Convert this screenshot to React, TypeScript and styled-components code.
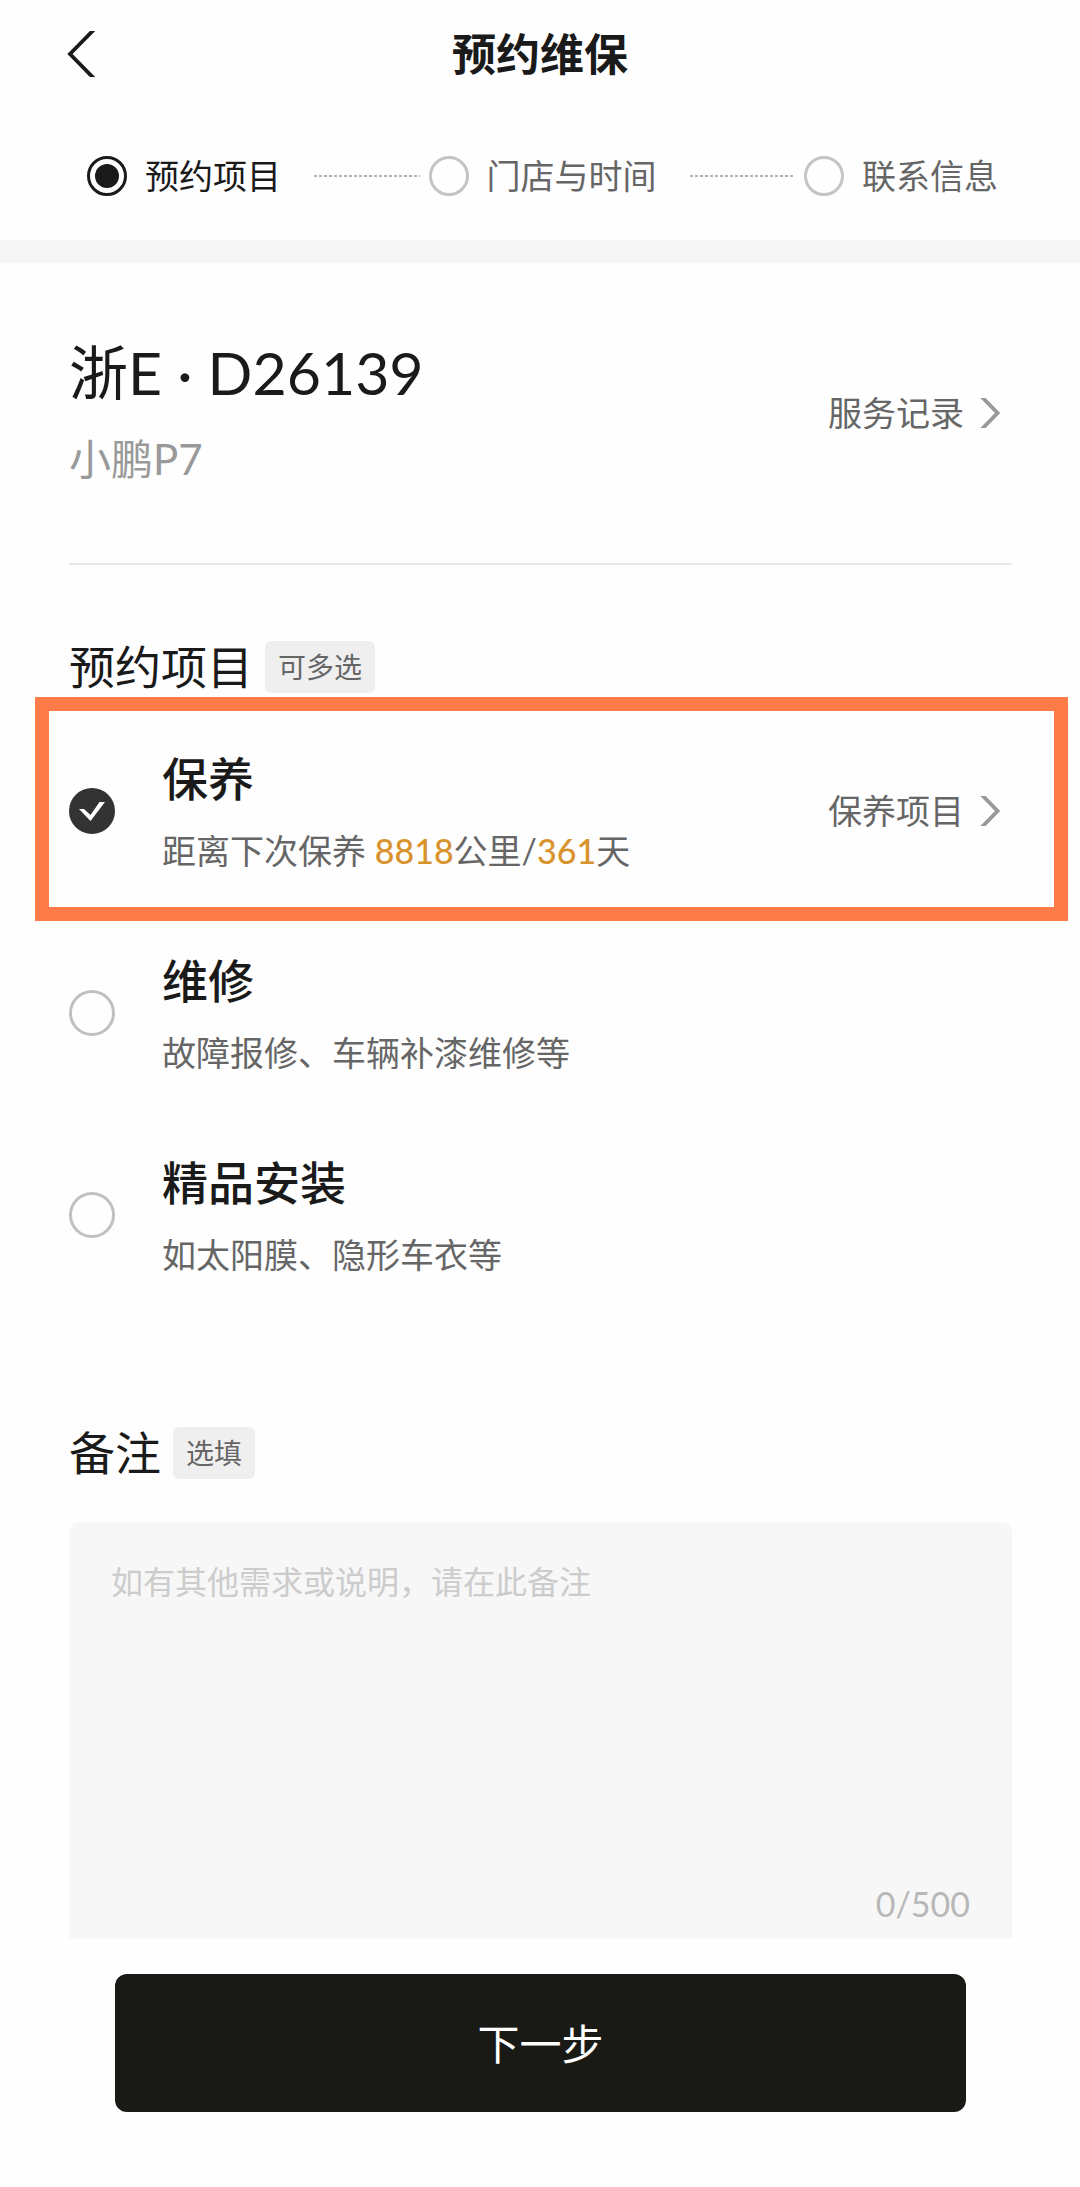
import React, { useState } from "react";
import styled, { createGlobalStyle } from "styled-components";

const ink = "#1a1a1a";
const muted = "#666666";

const GlobalStyle = createGlobalStyle`
  * { box-sizing: border-box; }
  body {
    margin: 0;
    background: #fefefe;
    color: ${ink};
    font-family: Lato, "Noto Sans CJK SC", "Noto Sans", sans-serif;
  }
  h1, h2, h3, p, ol, ul { margin: 0; padding: 0; font-weight: 400; }
  ol, ul { list-style: none; }
  button, textarea { font-family: inherit; }
`;

const Page = styled.div`
  display: flex;
  flex-direction: column;
`;

const Header = styled.header`
  display: grid;
  grid-template-columns: 1fr auto 1fr;
  align-items: center;
  height: 108px;
  padding: 0 66px;
`;

const BackButton = styled.button`
  display: flex;
  justify-self: start;
  padding: 0;
  border: 0;
  background: none;
  color: ${ink};
  cursor: pointer;
`;

const PageTitle = styled.h1`
  font-size: 44px;
  line-height: 64px;
  font-weight: 700;
`;

const Steps = styled.ol`
  display: flex;
  align-items: center;
  height: 132px;
  padding: 3px 82px 0 87px;
`;

const Step = styled.li<{ $active?: boolean }>`
  display: flex;
  align-items: center;
  gap: 18px;
  font-size: 34px;
  line-height: 48px;
  white-space: nowrap;
  color: ${(p) => (p.$active ? ink : muted)};
`;

const StepDot = styled.span<{ $active?: boolean }>`
  display: grid;
  place-items: center;
  width: 40px;
  height: 40px;
  border: 3px solid ${(p) => (p.$active ? ink : "#c4c4c4")};
  border-radius: 50%;

  &::after {
    content: "";
    width: 24px;
    height: 24px;
    border-radius: 50%;
    background: ${(p) => (p.$active ? ink : "transparent")};
  }
`;

const StepLine = styled.li`
  flex: 1;
  height: 2px;
  margin: 0 9px 0 33px;
  background: repeating-linear-gradient(90deg, #b4b4b4 0 3px, transparent 3px 5px);
`;

const Band = styled.div`
  height: 23px;
  background: #f6f6f6;
`;

const Main = styled.main`
  padding: 0 68px 0 69px;
`;

const Vehicle = styled.section`
  display: flex;
  align-items: center;
  justify-content: space-between;
  height: 302px;
  border-bottom: 2px solid #e8e8e8;
`;

const Plate = styled.h2`
  font-size: 59px;
  line-height: 76px;
`;

const Model = styled.p`
  font-size: 42px;
  line-height: 64px;
  margin-top: 16px;
  color: #999999;
`;

const MoreLink = styled.a`
  display: flex;
  align-items: center;
  gap: 16px;
  padding-right: 12px;
  font-size: 34px;
  line-height: 48px;
  color: ${muted};
  text-decoration: none;
  white-space: nowrap;

  svg { color: #999999; }
`;

const SectionHead = styled.div`
  display: flex;
  align-items: center;
  gap: 12px;
  height: 52px;
`;

const SectionTitle = styled.h2`
  font-size: 46px;
  line-height: 52px;
`;

const Badge = styled.span`
  padding: 0 13px;
  border-radius: 6px;
  background: #efefef;
  font-size: 28px;
  line-height: 52px;
  color: ${muted};
`;

const Items = styled.section`
  padding-top: 76px;
`;

const OptionList = styled.ul`
  display: flex;
  flex-direction: column;
  padding-top: 4px;
`;

const Option = styled.li<{ $marked?: boolean }>`
  display: flex;
  align-items: center;
  justify-content: space-between;
  ${(p) =>
    p.$marked
      ? `
    margin: 0 -56px 0 -34px;
    padding: 36px 42px 32px 20px;
    border: 14px solid #ff7b47;
  `
      : `
    padding: 28px 0 46px;
  `}
`;

const OptionLabel = styled.label`
  display: flex;
  align-items: center;
  gap: 47px;
  cursor: pointer;
`;

const CheckWrap = styled.span`
  display: grid;
  width: 46px;
  height: 46px;

  > * { grid-area: 1 / 1; }
  svg { pointer-events: none; z-index: 1; }
`;

const CheckInput = styled.input`
  appearance: none;
  width: 46px;
  height: 46px;
  margin: 0;
  border: 3px solid #c0c0c0;
  border-radius: 50%;
  cursor: pointer;

  &:checked {
    border-color: #333333;
    background: #333333;
  }
`;

const OptionText = styled.span`
  display: flex;
  flex-direction: column;
  gap: 16px;
`;

const OptionTitle = styled.span`
  font-size: 46px;
  line-height: 64px;
  font-weight: 500;
`;

const OptionNote = styled.span`
  font-size: 34px;
  line-height: 48px;
  color: ${muted};
`;

const Accent = styled.em`
  font-style: normal;
  font-weight: 500;
  color: #d8932d;
`;

const Remark = styled.section`
  padding-top: 102px;
`;

const NoteBox = styled.div`
  display: flex;
  flex-direction: column;
  height: 416px;
  margin-top: 43px;
  padding: 36px 42px 10px;
  border-radius: 10px 10px 0 0;
  background: #f7f7f7;
`;

const NoteInput = styled.textarea`
  flex: 1;
  padding: 0;
  border: 0;
  outline: 0;
  resize: none;
  background: transparent;
  font-size: 32px;
  line-height: 48px;
  color: ${ink};

  &::placeholder { color: #cccccc; opacity: 1; }
`;

const Counter = styled.output`
  align-self: flex-end;
  font-size: 34px;
  line-height: 48px;
  color: #b8b8b8;
`;

const Footer = styled.footer`
  padding: 36px 114px 74px 115px;
`;

const NextButton = styled.button`
  display: block;
  width: 100%;
  height: 138px;
  padding: 0 0 4px;
  border: 0;
  border-radius: 12px;
  background: #191a15;
  color: #ffffff;
  font-size: 42px;
  cursor: pointer;
`;

const ChevronRight = () => (
  <svg width="20" height="30" viewBox="0 0 20 30" fill="none" aria-hidden="true">
    <path d="M1 -2 L17.5 15 L1 32" stroke="currentColor" strokeWidth="3.8" />
  </svg>
);

interface Service {
  id: string;
  title: string;
  note: React.ReactNode;
  link?: string;
}

const services: Service[] = [
  {
    id: "maintain",
    title: "保养",
    note: (
      <>
        距离下次保养 <Accent>8818</Accent>公里/<Accent>361</Accent>天
      </>
    ),
    link: "保养项目",
  },
  { id: "repair", title: "维修", note: "故障报修、车辆补漆维修等" },
  { id: "install", title: "精品安装", note: "如太阳膜、隐形车衣等" },
];

export default function App() {
  const [picked, setPicked] = useState<string[]>(["maintain"]);
  const [remark, setRemark] = useState("");

  const toggle = (id: string) =>
    setPicked((list) => (list.includes(id) ? list.filter((x) => x !== id) : [...list, id]));

  return (
    <Page>
      <GlobalStyle />
      <Header>
        <BackButton type="button" aria-label="返回">
          <svg width="30" height="46" viewBox="0 0 30 46" fill="none" aria-hidden="true">
            <path d="M29.5 -3 L4 23 L29.5 49" stroke="currentColor" strokeWidth="3.8" />
          </svg>
        </BackButton>
        <PageTitle>预约维保</PageTitle>
      </Header>
      <Steps>
        <Step $active aria-current="step">
          <StepDot $active />
          预约项目
        </Step>
        <StepLine aria-hidden="true" />
        <Step>
          <StepDot />
          门店与时间
        </Step>
        <StepLine aria-hidden="true" />
        <Step>
          <StepDot />
          联系信息
        </Step>
      </Steps>
      <Band />
      <Main>
        <Vehicle>
          <div>
            <Plate>浙E · D26139</Plate>
            <Model>小鹏P7</Model>
          </div>
          <MoreLink href="#records">
            服务记录
            <ChevronRight />
          </MoreLink>
        </Vehicle>
        <Items>
          <SectionHead>
            <SectionTitle>预约项目</SectionTitle>
            <Badge>可多选</Badge>
          </SectionHead>
          <OptionList>
            {services.map((s) => (
              <Option key={s.id} $marked={s.id === "maintain"}>
                <OptionLabel htmlFor={s.id}>
                  <CheckWrap>
                    <CheckInput
                      id={s.id}
                      type="checkbox"
                      checked={picked.includes(s.id)}
                      onChange={() => toggle(s.id)}
                    />
                    {picked.includes(s.id) && (
                      <svg width="46" height="46" viewBox="0 0 46 46" aria-hidden="true">
                        <path d="M10 21 H15 L21.5 27 L30.5 14 H36 L21.5 33 Z" fill="#ffffff" />
                      </svg>
                    )}
                  </CheckWrap>
                  <OptionText>
                    <OptionTitle>{s.title}</OptionTitle>
                    <OptionNote>{s.note}</OptionNote>
                  </OptionText>
                </OptionLabel>
                {s.link && (
                  <MoreLink href="#items">
                    {s.link}
                    <ChevronRight />
                  </MoreLink>
                )}
              </Option>
            ))}
          </OptionList>
        </Items>
        <Remark>
          <SectionHead>
            <SectionTitle>备注</SectionTitle>
            <Badge>选填</Badge>
          </SectionHead>
          <NoteBox>
            <NoteInput
              aria-label="备注"
              placeholder="如有其他需求或说明，请在此备注"
              maxLength={500}
              value={remark}
              onChange={(e) => setRemark(e.target.value)}
            />
            <Counter>{remark.length}/500</Counter>
          </NoteBox>
        </Remark>
      </Main>
      <Footer>
        <NextButton type="button">下一步</NextButton>
      </Footer>
    </Page>
  );
}
